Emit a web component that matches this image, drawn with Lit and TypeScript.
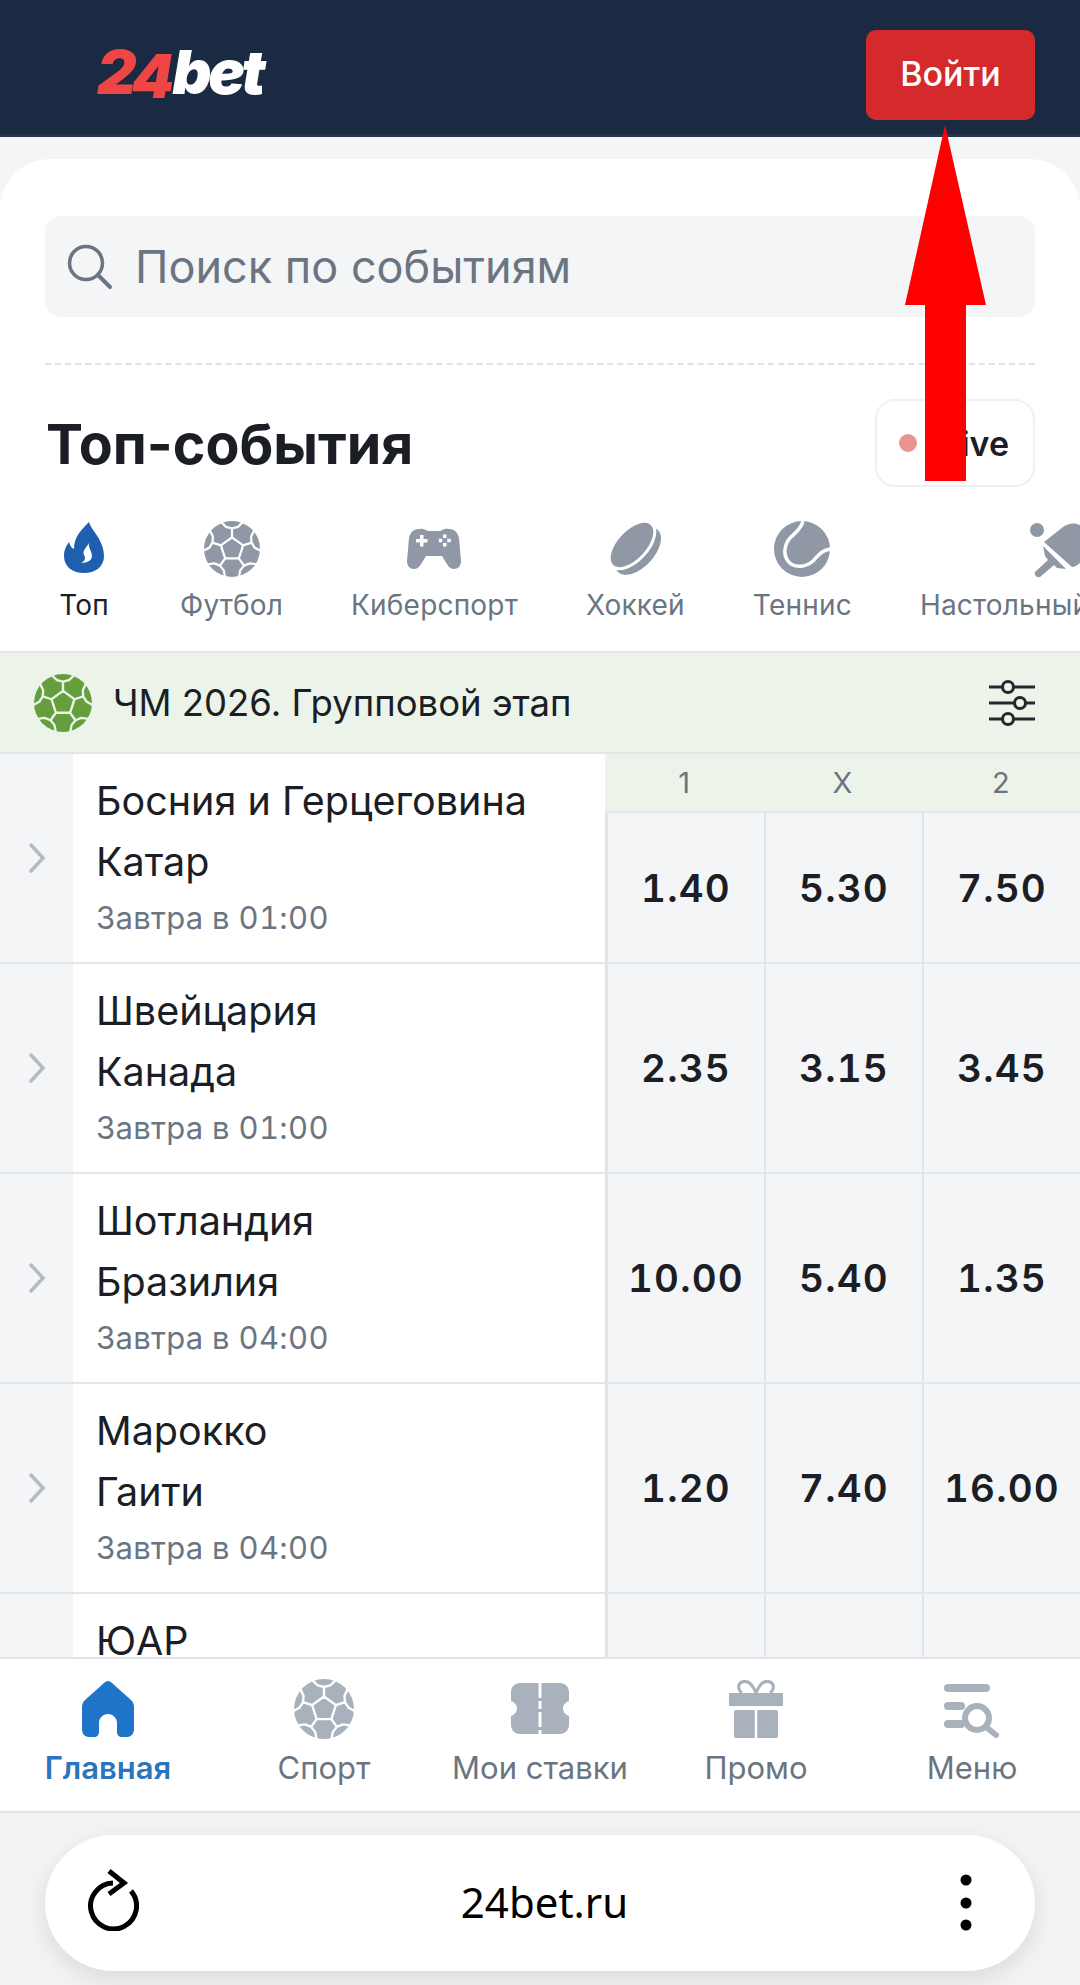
import { LitElement, html, css } from 'lit';
import { customElement } from 'lit/decorators.js';

const pt = (r: number, deg: number) => {
  const a = (deg * Math.PI) / 180;
  return `${(30 + r * Math.cos(a)).toFixed(1)} ${(30 + r * Math.sin(a)).toFixed(1)}`;
};

// ball seams: centre pentagon, spokes, rim pentagons
const ballSeams = () => {
  const angles = [-90, -18, 54, 126, 198];
  let d = 'M' + angles.map((a) => pt(12.5, a)).join('L') + 'Z';
  for (const a of angles) {
    d += `M${pt(12.5, a)}L${pt(22, a)}`;
    d += `M${pt(31, a - 22)}L${pt(24.5, a - 15)}L${pt(22, a)}L${pt(24.5, a + 15)}L${pt(31, a + 22)}`;
  }
  return d;
};

const ball = (cls: string) => html`<svg class=${cls} viewBox="0 0 60 60">
  <circle cx="30" cy="30" r="30" fill="currentColor"></circle>
  <path d=${ballSeams()} fill="none" stroke="var(--seam, #fff)" stroke-width="2.4" stroke-linejoin="round"></path>
</svg>`;

const flame = html`<svg class="tab-icon" viewBox="0 0 56 56">
  <path fill="#1f5fb0" d="M33 1C35 9 48 19 48 35C48 46 39 52 28 52C17 52 8 46 8 35C8 28 11 24 13 21C14 24 15 27 18 28C18 16 25 9 33 1Z"></path>
  <path fill="#fff" d="M33 22C32 27 36 30 36 35C36 39 32 42 25 42C29 40 30 37 28 34C26 30 30 27 33 22Z"></path>
</svg>`;

const gamepad = html`<svg class="tab-icon" viewBox="0 0 56 56">
  <path fill="currentColor" d="M14 8C17 7 19 9 22 10H34C37 9 39 7 42 8C48 8 51 10 53 17L55 40C55 45 52 48 48 48C44 48 42 45 39 40L36 35H20L17 40C14 45 12 48 8 48C4 48 1 45 1 40L3 17C5 10 8 8 14 8Z"></path>
  <path fill="#fff" d="M14 14h3.500v4h4v3.500h-4v4H14v-4h-4V18h4zM37 13.500h3.500V17H37zM37 22h3.500v3.500H37zM32.800 17.800h3.500v3.500h-3.500zM41.300 17.800h3.500v3.500h-3.500z"></path>
</svg>`;

const puck = html`<svg class="tab-icon" viewBox="0 0 56 56">
  <ellipse cx="31" cy="30" rx="29" ry="16" transform="rotate(-47 31 30)" fill="currentColor"></ellipse>
  <ellipse cx="25" cy="24" rx="29" ry="15.500" transform="rotate(-47 25 24)" fill="currentColor" stroke="#fff" stroke-width="3"></ellipse>
</svg>`;

const tennis = html`<svg class="tab-icon" viewBox="0 0 56 56">
  <circle cx="28" cy="28" r="28" fill="currentColor"></circle>
  <path fill="none" stroke="#fff" stroke-width="3.500" d="M29 0C27 8 22 11 17 16C10 23 9 34 14 40C20 48 32 46 39 40C44 35 47 29 57 28"></path>
</svg>`;

const paddle = html`<svg class="tab-icon" viewBox="0 0 56 56">
  <circle cx="8" cy="9" r="7" fill="currentColor"></circle>
  <path fill="currentColor" d="M15 21L34 6C44 -1 58 2 58 20C58 36 50 46 43 46Z"></path>
  <path fill="currentColor" d="M14 25L37 48L28 47L25 44L11 56C7 57 5 53 6 51L19 39L16 35Z"></path>
</svg>`;

const home = html`<svg class="nav-icon" viewBox="0 0 60 64">
  <path fill="#1e74c9" d="M30 4C31.500 4 33 5 34 6L53 23C55 25 56 27 56 30V52C56 57 53 60 49 60H44C41 60 39 58 39 55V46C39 41 35 37 30 37C25 37 21 41 21 46V55C21 58 19 60 16 60H11C7 60 4 57 4 52V30C4 27 5 25 7 23L26 6C27 5 28.500 4 30 4Z"></path>
</svg>`;

const ticket = html`<svg class="nav-icon" viewBox="0 0 60 64">
  <path fill="currentColor" d="M10 6H50C55 6 59 10 59 15V24C56 25 53 28 53 31.500C53 35 56 38 59 39V48C59 53 55 57 50 57H10C5 57 1 53 1 48V39C4 38 7 35 7 31.500C7 28 4 25 1 24V15C1 10 5 6 10 6Z"></path>
  <path stroke="#fff" stroke-width="3" stroke-dasharray="15 3 8 3" d="M30 6V57"></path>
</svg>`;

const gift = html`<svg class="nav-icon" viewBox="0 0 60 64">
  <path fill="none" stroke="currentColor" stroke-width="3" d="M30 16C26 6 21 3 16 5C11 7 12 13 16 16M30 16C34 6 39 3 44 5C49 7 48 13 44 16"></path>
  <rect x="3" y="16" width="54" height="13" fill="currentColor"></rect>
  <rect x="8" y="33" width="44" height="28" rx="2" fill="currentColor"></rect>
  <path stroke="#fff" stroke-width="2.500" d="M30 33V61"></path>
</svg>`;

const menu = html`<svg class="nav-icon" viewBox="0 0 60 64">
  <rect x="2" y="7" width="46" height="8" rx="4" fill="currentColor"></rect>
  <rect x="2" y="25" width="21" height="8" rx="4" fill="currentColor"></rect>
  <rect x="2" y="43" width="21" height="8" rx="4" fill="currentColor"></rect>
  <circle cx="35" cy="41" r="12" fill="none" stroke="currentColor" stroke-width="6"></circle>
  <path stroke="currentColor" stroke-width="6" stroke-linecap="round" d="M44 50L54 58"></path>
</svg>`;

const tabs = [
  { label: 'Топ', icon: flame, on: true },
  { label: 'Футбол', icon: ball('tab-icon') },
  { label: 'Киберспорт', icon: gamepad },
  { label: 'Хоккей', icon: puck },
  { label: 'Теннис', icon: tennis },
  { label: 'Настольный теннис', icon: paddle },
];

const matches = [
  { a: 'Босния и Герцеговина', b: 'Катар', t: 'Завтра в 01:00', odds: ['1.40', '5.30', '7.50'] },
  { a: 'Швейцария', b: 'Канада', t: 'Завтра в 01:00', odds: ['2.35', '3.15', '3.45'] },
  { a: 'Шотландия', b: 'Бразилия', t: 'Завтра в 04:00', odds: ['10.00', '5.40', '1.35'] },
  { a: 'Марокко', b: 'Гаити', t: 'Завтра в 04:00', odds: ['1.20', '7.40', '16.00'] },
  { a: 'ЮАР', b: '', t: '', odds: ['', '', ''] },
];

const navItems = [
  { label: 'Главная', icon: home, on: true },
  { label: 'Спорт', icon: ball('nav-icon') },
  { label: 'Мои ставки', icon: ticket },
  { label: 'Промо', icon: gift },
  { label: 'Меню', icon: menu },
];

@customElement('app-root')
export class AppRoot extends LitElement {
  static styles = css`
    :host {
      display: block;
      position: relative;
      height: 1985px;
      overflow: hidden;
      font-family: Inter, "Liberation Sans", sans-serif;
      background: #f3f5f7;
      color: #1b1e24;
    }
    .page {
      display: flex;
      flex-direction: column;
      height: 1985px;
    }

    .header {
      flex: none;
      border-bottom: 3px solid #27364b;
      background: #1a2a42;
      display: flex;
      justify-content: space-between;
      padding: 30px 45px 0 97px;
      height: 104px;
    }
    .logo {
      display: flex;
      align-items: flex-start;
      font-weight: 900;
      font-style: italic;
      font-size: 61px;
      line-height: 1;
      letter-spacing: -3.5px;
      color: #fff;
      margin-top: 12px;
    }
    .logo b {
      color: #f04545;
      font-weight: 900;
      margin-right: 3px;
      letter-spacing: -5px;
    }
    .logo b span {
      display: inline-block;
      transform: translateY(4px);
    }
    .login {
      width: 169px;
      height: 90px;
      box-sizing: border-box;
      padding-bottom: 3px;
      border-radius: 10px;
      background: #d42a2b;
      color: #fff;
      font-size: 34px;
      font-weight: 500;
      display: flex;
      align-items: center;
      justify-content: center;
    }

    .card {
      flex: none;
      margin-top: 22px;
      background: #fff;
      border-radius: 50px 50px 0 0;
      padding-top: 57px;
    }
    .search {
      margin: 0 45px;
      height: 101px;
      border-radius: 16px;
      background: #f3f5f7;
      display: flex;
      align-items: center;
      padding-left: 22px;
      gap: 22px;
      color: #6b7582;
      font-size: 45px;
    }
    .search svg {
      width: 46px;
      height: 46px;
    }
    .dashed {
      margin: 46px 45px 0;
      border-top: 2px dashed #dfe3e7;
    }
    .title-row {
      margin: 34px 45px 0 46px;
      display: flex;
      justify-content: space-between;
      align-items: center;
    }
    h1 {
      margin: 0;
      font-size: 55.5px;
      font-weight: 650;
    }
    .live {
      width: 160px;
      height: 88px;
      box-sizing: border-box;
      border: 2px solid #eef0f2;
      border-radius: 20px;
      display: flex;
      align-items: center;
      justify-content: flex-end;
      padding-right: 24px;
      font-size: 34px;
      font-weight: 600;
      gap: 24px;
    }
    .dot {
      width: 18px;
      height: 18px;
      border-radius: 50%;
      background: #ea9490;
    }

    .tabs {
      margin-top: 34px;
      height: 130px;
      display: flex;
      gap: 68px;
      padding-left: 56px;
      overflow: hidden;
    }
    .tab {
      flex: none;
      display: flex;
      flex-direction: column;
      align-items: center;
      color: #6b7582;
      font-size: 28px;
      letter-spacing: 0.2px;
      line-height: 34px;
      gap: 11px;
      white-space: nowrap;
      --seam: #fff;
    }
    .tab.on {
      color: #1b1e24;
    }
    .tab-icon {
      width: 56px;
      height: 56px;
      color: #8f98a4;
    }

    .section {
      flex: none;
      height: 99px;
      background: #ecf4ea;
      border-top: 2px solid #e1e6e8;
      border-bottom: 2px solid #e1e6e8;
      display: flex;
      align-items: center;
      padding: 0 44px 0 34px;
      font-size: 36.5px;
      --seam: #ecf4ea;
    }
    .section-ball {
      width: 58px;
      height: 58px;
      color: #659f3d;
      margin-right: 21px;
    }
    .section span {
      flex: 1;
    }
    .section .filter {
      width: 48px;
      height: 48px;
    }

    .table {
      flex: 1;
      min-height: 0;
      overflow: hidden;
    }
    .row {
      height: 210px;
      display: flex;
      box-sizing: border-box;
      border-bottom: 2px solid #e3e6ea;
    }
    .gutter {
      flex: none;
      width: 73px;
      display: flex;
      align-items: center;
      padding-left: 28px;
      box-sizing: border-box;
    }
    .gutter svg {
      width: 18px;
      height: 32px;
    }
    .teams {
      flex: none;
      width: 532px;
      background: #fff;
      padding: 17px 0 0 23px;
      box-sizing: border-box;
      font-size: 39.5px;
      line-height: 61px;
      white-space: nowrap;
    }
    .time {
      margin-top: 4px;
      font-size: 31px;
      letter-spacing: 0.3px;
      line-height: 42px;
      color: #6b7582;
      font-variant-numeric: tabular-nums;
    }
    .market {
      flex: 1;
      display: flex;
      flex-direction: column;
      min-width: 0;
    }
    .heads {
      flex: none;
      height: 59px;
      box-sizing: border-box;
      background: #ecf4ea;
      display: flex;
      border-bottom: 2px solid #e1e6e8;
    }
    .heads div {
      flex: 1;
      display: flex;
      align-items: center;
      justify-content: center;
      font-size: 29px;
      color: #6b7582;
    }
    .odds {
      flex: 1;
      display: flex;
    }
    .odd {
      flex: 1;
      display: flex;
      align-items: center;
      justify-content: center;
      border-left: 2px solid #e0e4e8;
      font-size: 38.5px;
      font-weight: 600;
      letter-spacing: 1.2px;
      font-variant-numeric: tabular-nums;
    }
    .odd:first-child {
      border-left-width: 3px;
    }

    .nav {
      flex: none;
      height: 156px;
      box-sizing: border-box;
      background: #fff;
      border-top: 2px solid #e0e4e8;
      border-bottom: 2px solid #e0e4e8;
      display: flex;
    }
    .nav-item {
      flex: 1;
      display: flex;
      flex-direction: column;
      align-items: center;
      padding-top: 18px;
      color: #6b7582;
      font-size: 31px;
      line-height: 36px;
      gap: 9px;
      white-space: nowrap;
    }
    .nav-item.on {
      color: #2a75bb;
      font-weight: 600;
    }
    .nav-icon {
      width: 60px;
      height: 64px;
      color: #a9b1bd;
    }

    .browser {
      flex: none;
      height: 172px;
      background: #f3f3f4;
      padding: 22px 45px 0;
      box-sizing: border-box;
    }
    .pill {
      height: 136px;
      border-radius: 68px;
      background: #fff;
      box-shadow: 0 8px 24px rgba(0, 0, 0, 0.1);
      display: flex;
      align-items: center;
      justify-content: space-between;
      padding: 0 61px 0 42px;
      font-family: "Noto Sans", sans-serif;
      font-size: 42px;
      color: #000;
    }
    .pill span {
      margin: 0 8px 4px 0;
    }
    .pill svg {
      display: block;
    }
    .refresh {
      width: 52px;
      height: 62px;
      margin-bottom: 6px;
    }
    .dots {
      width: 16px;
      height: 62px;
    }

    .arrow {
      position: absolute;
      left: 900px;
      top: 120px;
      width: 90px;
      height: 365px;
    }
  `;

  private renderRow(m: (typeof matches)[number], first: boolean) {
    return html`<div class="row">
      <div class="gutter">
        <svg viewBox="0 0 18 32"><path d="M3 3L15 16L3 29" fill="none" stroke="#b3bac6" stroke-width="3.500" stroke-linecap="round"></path></svg>
      </div>
      <div class="teams">
        <div>${m.a}</div>
        <div>${m.b}</div>
        <div class="time">${m.t}</div>
      </div>
      <div class="market">
        ${first ? html`<div class="heads"><div>1</div><div>X</div><div>2</div></div>` : ''}
        <div class="odds">${m.odds.map((o) => html`<div class="odd">${o}</div>`)}</div>
      </div>
    </div>`;
  }

  render() {
    return html`<div class="page">
        <div class="header">
          <div class="logo"><b>2<span>4</span></b>bet</div>
          <div class="login">Войти</div>
        </div>
        <div class="card">
          <div class="search">
            <svg viewBox="0 0 46 46"><circle cx="19" cy="19" r="16.500" fill="none" stroke="#6b7582" stroke-width="3.500"></circle><path d="M31 31L43 43" stroke="#6b7582" stroke-width="4" stroke-linecap="round"></path></svg>
            <span>Поиск по событиям</span>
          </div>
          <div class="dashed"></div>
          <div class="title-row">
            <h1>Топ-события</h1>
            <div class="live"><i class="dot"></i>Live</div>
          </div>
          <div class="tabs">
            ${tabs.map((t) => html`<div class="tab ${t.on ? 'on' : ''}">${t.icon}<span>${t.label}</span></div>`)}
          </div>
        </div>
        <div class="section">
          ${ball('section-ball')}
          <span>ЧМ 2026. Групповой этап</span>
          <svg class="filter" viewBox="0 0 48 48" fill="none" stroke="#24282e" stroke-width="3">
            <path d="M1 8H14M26 8H47M1 24H26M38 24H47M1 40H14M26 40H47"></path>
            <circle cx="20" cy="8" r="5.500"></circle><circle cx="32" cy="24" r="5.500"></circle><circle cx="20" cy="40" r="5.500"></circle>
          </svg>
        </div>
        <div class="table">${matches.map((m, i) => this.renderRow(m, i === 0))}</div>
        <div class="nav">
          ${navItems.map((n) => html`<div class="nav-item ${n.on ? 'on' : ''}">${n.icon}<span>${n.label}</span></div>`)}
        </div>
        <div class="browser">
          <div class="pill">
            <svg class="refresh" viewBox="0 0 52 62" fill="none" stroke="#000" stroke-width="5">
              <path d="M26 14A23 23 0 1 0 44 22"></path>
              <path d="M22 2L37 14L22 25"></path>
            </svg>
            <span>24bet.ru</span>
            <svg class="dots" viewBox="0 0 16 62" fill="#000"><circle cx="8" cy="8" r="5.500"></circle><circle cx="8" cy="31" r="5.500"></circle><circle cx="8" cy="53" r="5.500"></circle></svg>
          </div>
        </div>
      </div>
      <svg class="arrow" viewBox="0 0 90 365"><path fill="#f00" d="M45 5L86 185H66V361H25V185H5Z"></path></svg>`;
  }
}
